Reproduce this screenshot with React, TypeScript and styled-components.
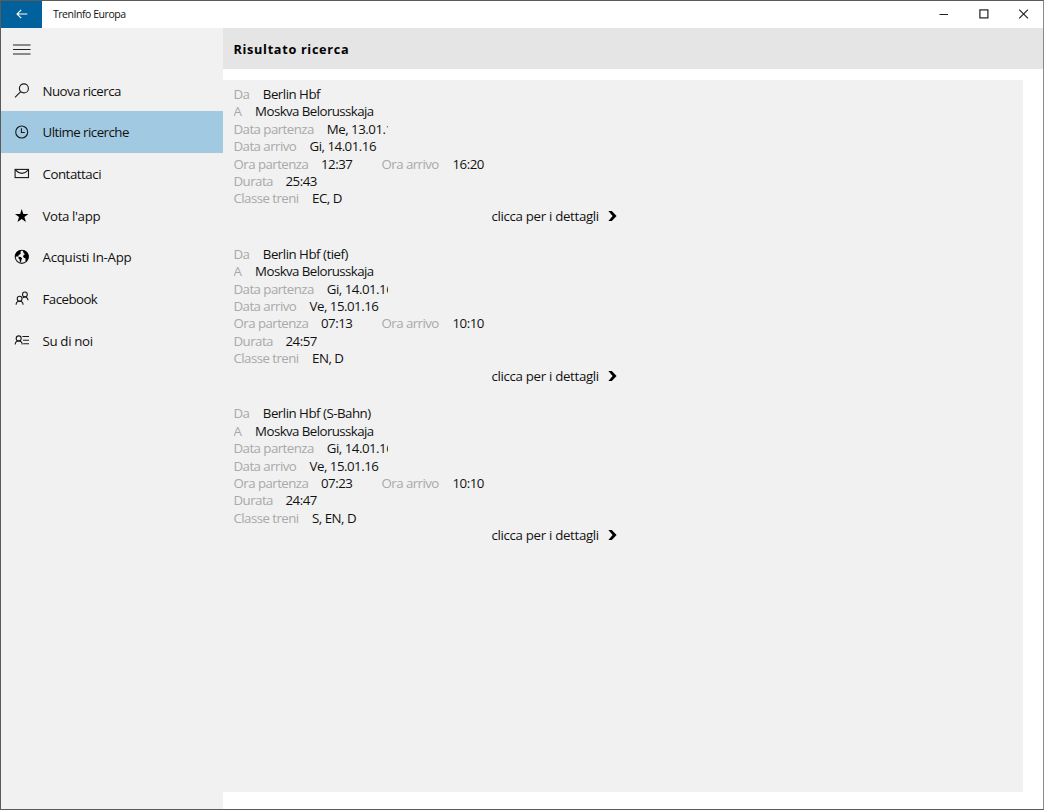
import React, { useState } from 'react'
import styled, { createGlobalStyle } from 'styled-components'

type Result = {
  from: string
  to: string
  departDate: string
  arriveDate: string
  departTime: string
  arriveTime: string
  duration: string
  trains: string
}

const results: Result[] = [
  {
    from: 'Berlin Hbf',
    to: 'Moskva Belorusskaja',
    departDate: 'Me, 13.01.16',
    arriveDate: 'Gi, 14.01.16',
    departTime: '12:37',
    arriveTime: '16:20',
    duration: '25:43',
    trains: 'EC, D',
  },
  {
    from: 'Berlin Hbf (tief)',
    to: 'Moskva Belorusskaja',
    departDate: 'Gi, 14.01.16',
    arriveDate: 'Ve, 15.01.16',
    departTime: '07:13',
    arriveTime: '10:10',
    duration: '24:57',
    trains: 'EN, D',
  },
  {
    from: 'Berlin Hbf (S-Bahn)',
    to: 'Moskva Belorusskaja',
    departDate: 'Gi, 14.01.16',
    arriveDate: 'Ve, 15.01.16',
    departTime: '07:23',
    arriveTime: '10:10',
    duration: '24:47',
    trains: 'S, EN, D',
  },
]

const SearchIcon = () => (
  <Icon viewBox="0 0 16 16">
    <circle cx="9.9" cy="5.4" r="4.5" />
    <path d="M6.7 8.7 L1 14.4" />
  </Icon>
)

const ClockIcon = () => (
  <Icon viewBox="0 0 16 16">
    <circle cx="7.7" cy="8" r="6" />
    <path d="M7.4 4.3 V8.5 H10.8" />
  </Icon>
)

const MailIcon = () => (
  <Icon viewBox="0 0 16 16">
    <rect x="1.1" y="3.4" width="13.4" height="8.2" />
    <path d="M1.4 4 C4 6.6 6.3 7.4 7.8 7.4 C9.5 7.4 12 6.6 14.2 4" />
  </Icon>
)

const StarIcon = () => (
  <Icon viewBox="0 0 16 16">
    <path
      d="M7.7 1 L9.3 5.9 H14.4 L10.4 9 L11.9 14 L7.7 11 L3.5 14 L5 9 L1 5.9 H6.1 Z"
      fill="#000"
      stroke="none"
    />
  </Icon>
)

const GlobeIcon = () => (
  <Icon viewBox="0 0 16 16">
    <circle cx="7.8" cy="7.8" r="6.6" />
    <path
      d="M1.2 8 C1 4.4 3.2 1.8 6.6 1.1 L7.4 2 L6.2 3 L7 4.2 L5.6 5.4 L4.4 6.4 L4.2 7.6 L2.6 7.4 Z M4.6 7.8 L6.8 8 L8.2 9.4 L7.4 10.8 L7 13.6 L5.8 12.4 L5.6 10.4 L4.4 9.2 Z"
      fill="#000"
      stroke="none"
    />
    <path
      d="M9.4 1.2 C12.8 2 14.6 4.6 14.5 8 C14.4 9.8 13.6 11.6 12.2 12.8 L11.4 11.4 L11.6 9.6 L10 8.8 L9 7.4 L9.8 5.8 L11.2 5.2 L9.8 4.2 L9 2.8 Z"
      fill="#000"
      stroke="none"
    />
  </Icon>
)

const PeopleIcon = () => (
  <Icon viewBox="0 0 16 16">
    <circle cx="10.9" cy="3.4" r="2.4" />
    <path d="M8.8 7 C10.8 4.8 13.8 6.2 14.1 9.2" />
    <circle cx="5.6" cy="7.7" r="2.4" />
    <path d="M2.1 13.7 C2.2 9 9 9 9.1 13.7" />
  </Icon>
)

const ContactIcon = () => (
  <Icon viewBox="0 0 16 16">
    <circle cx="4.7" cy="5.4" r="2.5" />
    <path d="M1.2 11.4 C1.3 6.8 8.1 6.8 8.2 11.4 M8.4 3.5 H15 M9 7.2 H15 M9.2 10.8 H15" />
  </Icon>
)

const menu = [
  { name: 'Nuova ricerca', spacing: -0.55, icon: <SearchIcon /> },
  { name: 'Ultime ricerche', spacing: -0.54, icon: <ClockIcon /> },
  { name: 'Contattaci', spacing: -0.47, icon: <MailIcon /> },
  { name: "Vota l'app", spacing: -0.38, icon: <StarIcon /> },
  { name: 'Acquisti In-App', spacing: -0.28, icon: <GlobeIcon /> },
  { name: 'Facebook', spacing: -0.55, icon: <PeopleIcon /> },
  { name: 'Su di noi', spacing: -0.35, icon: <ContactIcon /> },
]

const ResultItem = ({ data }: { data: Result }) => (
  <Item>
    <Row>
      <Label $width={29.3}>Da</Label>
      <Value>{data.from}</Value>
    </Row>
    <Row>
      <Label $width={21.6}>A</Label>
      <Station>{data.to}</Station>
    </Row>
    <Row $width={154.5}>
      <Label $width={93.3}>Data partenza</Label>
      <Value>{data.departDate}</Value>
    </Row>
    <Row>
      <Label $width={76}>Data arrivo</Label>
      <Value>{data.arriveDate}</Value>
    </Row>
    <Row>
      <Label $width={87.5}>Ora partenza</Label>
      <Time>{data.departTime}</Time>
      <Label $width={71}>Ora arrivo</Label>
      <Value>{data.arriveTime}</Value>
    </Row>
    <Row>
      <Label $width={52}>Durata</Label>
      <Value>{data.duration}</Value>
    </Row>
    <Row>
      <Label $width={78.5}>Classe treni</Label>
      <Value>{data.trains}</Value>
    </Row>
    <Details>
      clicca per i dettagli
      <Chevron viewBox="0 0 9 10">
        <path d="M0.4 0 H3.8 L8.6 5 L3.8 10 H0.4 L4.6 5 Z" fill="#000" />
      </Chevron>
    </Details>
  </Item>
)

const App = () => {
  const [active, setActive] = useState<number>(1)

  return (
    <Window>
      <GlobalStyle />
      <TitleBar>
        <BackButton aria-label="Indietro">
          <svg width="12" height="10" viewBox="0 0 12 10" fill="none" stroke="#fff" strokeWidth="1.1">
            <path d="M11.3 5 H1 M5.2 0.8 L1 5 L5.2 9.2" />
          </svg>
        </BackButton>
        <AppName>TrenInfo Europa</AppName>
        <WindowButtons>
          <svg width="10" height="10" viewBox="0 0 10 10" fill="none" stroke="#222">
            <path d="M0.5 5.5 H9" />
          </svg>
          <svg width="10" height="10" viewBox="0 0 10 10" fill="none" stroke="#222" strokeWidth="1.2">
            <rect x="0.9" y="0.9" width="8" height="8" />
          </svg>
          <svg width="10" height="10" viewBox="0 0 10 10" fill="none" stroke="#222" strokeWidth="1.1">
            <path d="M0.2 0.6 L9 9.4 M9 0.6 L0.2 9.4" />
          </svg>
        </WindowButtons>
      </TitleBar>
      <Body>
        <Sidebar>
          <MenuToggle aria-label="Menu">
            <svg width="18" height="11" viewBox="0 0 18 11" stroke="#222" strokeWidth="1">
              <path d="M0 1 H17.5 M0 5.5 H17.5 M0 10 H17.5" />
            </svg>
          </MenuToggle>
          {menu.map((o, key: number) => (
            <MenuItem
              key={key}
              $active={key === active}
              $spacing={o.spacing}
              onClick={() => setActive(key)}
            >
              {o.icon}
              <span>{o.name}</span>
            </MenuItem>
          ))}
        </Sidebar>
        <Content>
          <PageHeader>Risultato ricerca</PageHeader>
          <Panel>
            {results.map((o, key: number) => (
              <ResultItem key={key} data={o} />
            ))}
          </Panel>
        </Content>
      </Body>
    </Window>
  )
}

export default App

const GlobalStyle = createGlobalStyle`
  * {
    box-sizing: border-box;
  }
  body {
    margin: 0;
    font-family: "Segoe UI", "Open Sans", "Noto Sans", sans-serif;
    font-size: 13.3px;
    color: #111;
  }
  button {
    border: 0;
    padding: 0;
    font: inherit;
    color: inherit;
    background: none;
  }
`

const Window = styled.div`
  display: flex;
  flex-direction: column;
  width: 1044px;
  height: 810px;
  overflow: hidden;
  background: #fff;
  border: 1px solid #5a5a5a;
  border-right-color: #8a8a8a;
`

const TitleBar = styled.div`
  display: flex;
  align-items: stretch;
  flex: none;
  height: 27px;
`

const BackButton = styled.button`
  display: flex;
  align-items: center;
  justify-content: center;
  width: 41.4px;
  padding-bottom: 2px;
  background: #00619d;
`

const AppName = styled.div`
  flex: 1;
  padding-left: 10.5px;
  line-height: 26px;
  font-size: 10.5px;
  letter-spacing: -0.45px;
`

const WindowButtons = styled.div`
  display: flex;
  align-items: center;
  gap: 30px;
  padding: 0 14px 2px 0;
`

const Body = styled.div`
  display: flex;
  flex: 1;
  min-height: 0;
`

const Sidebar = styled.div`
  display: flex;
  flex-direction: column;
  width: 222px;
  background: #f1f1f1;
`

const MenuToggle = styled.button`
  display: flex;
  align-items: center;
  height: 41.7px;
  padding: 1px 0 0 12px;
`

const MenuItem = styled.button<{ $active: boolean; $spacing: number }>`
  display: flex;
  align-items: center;
  gap: 12.5px;
  height: 41.7px;
  padding-left: 13px;
  text-align: left;
  letter-spacing: ${(p) => p.$spacing}px;
  background: ${(p) => (p.$active ? '#a1cae2' : 'transparent')};
`

const Icon = styled.svg`
  width: 16px;
  height: 16px;
  fill: none;
  stroke: #1a1a1a;
  stroke-width: 1.1;
`

const Content = styled.div`
  display: flex;
  flex-direction: column;
  flex: 1;
`

const PageHeader = styled.div`
  height: 41px;
  padding-left: 10.5px;
  line-height: 42px;
  font-size: 12.7px;
  font-weight: 700;
  letter-spacing: 0.68px;
  color: #000;
  background: #e5e5e5;
`

const Panel = styled.div`
  flex: 1;
  margin: 11px 20px 17px 0;
  padding: 6.1px 0 0 10.5px;
  background: #f1f1f1;
`

const Item = styled.div`
  width: 383px;
  height: 159.7px;
`

const Row = styled.div<{ $width?: number }>`
  display: flex;
  width: ${(p) => (p.$width ? `${p.$width}px` : 'auto')};
  height: 17.4px;
  line-height: 17.4px;
  overflow: hidden;
  white-space: nowrap;
  letter-spacing: -0.5px;
`

const Label = styled.span<{ $width: number }>`
  flex: none;
  width: ${(p) => p.$width}px;
  letter-spacing: -0.56px;
  color: #a9a9a9;
`

const Value = styled.span`
  flex: none;
`

const Station = styled(Value)`
  letter-spacing: -0.58px;
`

const Time = styled(Value)`
  width: 60.5px;
`

const Details = styled.div`
  display: flex;
  align-items: center;
  justify-content: flex-end;
  gap: 8.6px;
  height: 17.4px;
  line-height: 17.4px;
  letter-spacing: -0.33px;
`

const Chevron = styled.svg`
  width: 9px;
  height: 10px;
  margin-bottom: 1px;
`
